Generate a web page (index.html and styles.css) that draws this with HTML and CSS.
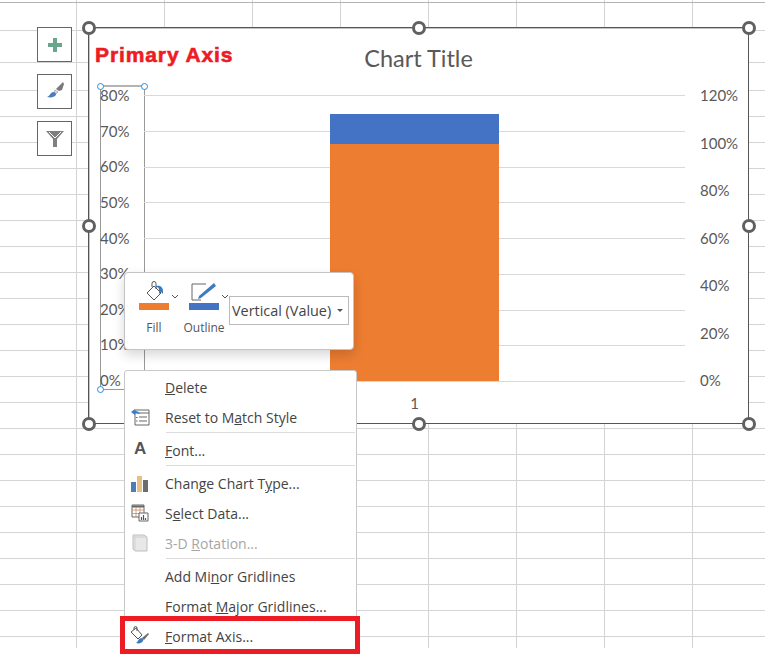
FILE: index.html
```html
<!DOCTYPE html>
<html lang="en">
<head>
    <meta charset="UTF-8">
    <title>Format Axis</title>
    <link rel="stylesheet" href="styles.css">
</head>
<body>

<div class="sheet">

    <div class="side-tools">
        <button class="side-btn">
            <svg width="16" height="16" viewBox="0 0 16 16"><path d="M6 1h4v5h5v4h-5v5H6v-5H1V6h5z" fill="#6aa68e"/></svg>
        </button>
        <button class="side-btn">
            <svg width="20" height="20" viewBox="0 0 20 20">
                <path d="M18 0l1 2-2 6-3 1-3-2z" fill="#7a7a7a"/>
                <path d="M10 8l3 2-2 2-2-2z" fill="#d5d5d5" stroke="#888" stroke-width=".5"/>
                <path d="M8 10c2 0 3 1 3 3-2 2-4 3-9 2 3-1 3-4 6-5z" fill="#4a7ebb"/>
            </svg>
        </button>
        <button class="side-btn">
            <svg width="20" height="20" viewBox="0 0 20 20"><path d="M1 2h18l-7 8v8H8v-8z" fill="#7f7f7f"/><path d="M4 3l6 6 6-6" fill="none" stroke="#fff"/></svg>
        </button>
    </div>

    <div class="chart">
        <div class="axis-note">Primary Axis</div>
        <div class="chart-title">Chart Title</div>

        <div class="axis-box">
            <i class="dot dot-tl"></i>
            <i class="dot dot-tr"></i>
            <i class="dot dot-bl"></i>
        </div>

        <div class="plot-row">
            <div class="axis axis-left">
                <span>80%</span><span>70%</span><span>60%</span><span>50%</span><span>40%</span><span>30%</span><span>20%</span><span>10%</span><span>0%</span>
            </div>
            <div class="plot">
                <div class="bar">
                    <div class="bar-blue"></div>
                    <div class="bar-orange"></div>
                </div>
            </div>
            <div class="axis axis-right">
                <span>120%</span><span>100%</span><span>80%</span><span>60%</span><span>40%</span><span>20%</span><span>0%</span>
            </div>
        </div>
        <div class="cat-label">1</div>

        <i class="handle h-tl"></i><i class="handle h-tc"></i><i class="handle h-tr"></i>
        <i class="handle h-ml"></i><i class="handle h-mr"></i>
        <i class="handle h-bl"></i><i class="handle h-bc"></i><i class="handle h-br"></i>
    </div>

    <div class="mini-bar">
        <div class="mini-tool">
            <svg class="mini-icon" width="30" height="22" viewBox="0 0 30 22">
                <path d="M8 12l7-7 7 7-7 7z" fill="#fff" stroke="#555"/>
                <path d="M13 6V2.500a2 2 0 0 1 4 0V8" fill="none" stroke="#555"/>
                <path d="M17 5c4-1 7 1 7 5v3l-2-2-2 2v-4c0-2-1-3-3-3z" fill="#3f7cbf"/>
            </svg>
            <i class="swatch swatch-orange"></i>
            <span class="mini-label">Fill</span>
        </div>
        <svg class="chev" width="8" height="5" viewBox="0 0 8 5"><path d="M1 1l3 3 3-3" fill="none" stroke="#555"/></svg>
        <div class="mini-tool tool-outline">
            <svg class="mini-icon" width="30" height="22" viewBox="0 0 30 22">
                <path d="M17 3H3v16h9" fill="none" stroke="#666"/>
                <path d="M10 15l-1 3 3-1L27 5l-2-3z" fill="#3f7cbf"/>
            </svg>
            <i class="swatch swatch-blue"></i>
            <span class="mini-label">Outline</span>
        </div>
        <svg class="chev" width="8" height="5" viewBox="0 0 8 5"><path d="M1 1l3 3 3-3" fill="none" stroke="#555"/></svg>
        <div class="mini-select">
            <span>Vertical (Value)</span>
            <i class="caret"></i>
        </div>
    </div>

    <div class="menu">
        <div class="menu-item"><span class="menu-text"><u>D</u>elete</span></div>
        <div class="menu-item">
            <svg class="menu-icon" width="20" height="20" viewBox="0 0 20 20">
                <path d="M5 3h14v15H5z" fill="#fff" stroke="#666"/>
                <path d="M5 6h14M9 10h8M9 14h8" stroke="#666"/>
                <path d="M6 10.500h1.500M6 14h1.500" stroke="#666"/>
                <path d="M1 5l4-3v2c3 0 4 1 5 3-2-1-3-1-5-1v2z" fill="#3f7cbf"/>
            </svg>
            <span class="menu-text">Reset to M<u>a</u>tch Style</span>
        </div>
        <div class="menu-sep"></div>
        <div class="menu-item">
            <span class="menu-letter">A</span>
            <span class="menu-text"><u>F</u>ont...</span>
        </div>
        <div class="menu-sep"></div>
        <div class="menu-item">
            <svg class="menu-icon" width="20" height="20" viewBox="0 0 20 20">
                <path d="M1 9h5v10H1z" fill="#4a7ebb"/>
                <path d="M7 3h5v16H7z" fill="#e6c183"/>
                <path d="M13 7h5v12h-5z" fill="#6d6d6d"/>
            </svg>
            <span class="menu-text">Change Chart T<u>y</u>pe...</span>
        </div>
        <div class="menu-item">
            <svg class="menu-icon" width="20" height="20" viewBox="0 0 20 20">
                <path d="M2 2h12v12H2z" fill="#fff" stroke="#666"/>
                <path d="M2 3.500h12" stroke="#666" stroke-width="2"/>
                <path d="M2 7h12M2 10.500h12M6 4v10M10 4v10" stroke="#d08a5a" stroke-width=".8"/>
                <path d="M9 10h9v8H9z" fill="#fff" stroke="#666"/>
                <path d="M11.500 17v-3M13.500 17v-5M15.500 17v-2" stroke="#555" stroke-width="1.200"/>
            </svg>
            <span class="menu-text">S<u>e</u>lect Data...</span>
        </div>
        <div class="menu-item is-disabled">
            <svg class="menu-icon" width="20" height="20" viewBox="0 0 20 20">
                <path d="M3 2h11l3 2v14H5l-2-2z" fill="#e8e8e8" stroke="#bdbdbd"/>
                <path d="M3 2l2 2h12M5 4v14" fill="none" stroke="#cfcfcf"/>
            </svg>
            <span class="menu-text">3-D <u>R</u>otation...</span>
        </div>
        <div class="menu-sep"></div>
        <div class="menu-item"><span class="menu-text">Add Mi<u>n</u>or Gridlines</span></div>
        <div class="menu-item"><span class="menu-text">Format <u>M</u>ajor Gridlines...</span></div>
        <div class="menu-item">
            <svg class="menu-icon" width="20" height="20" viewBox="0 0 20 20">
                <path d="M1 6l5-4 6 7-4 4z" fill="#fff" stroke="#555"/>
                <path d="M4 4V2a1.500 1.500 0 0 1 3 0v3" fill="none" stroke="#555"/>
                <path d="M18 7l1 1-5 6-2-2z" fill="#6d6d6d"/>
                <path d="M11 12c2 0 3 1 2 3-1 2-4 3-7 2 2-1 2-4 5-5z" fill="#3f7cbf"/>
            </svg>
            <span class="menu-text"><u>F</u>ormat Axis...</span>
        </div>
    </div>

    <div class="callout"></div>
</div>

</body>
</html>
```

FILE: styles.css
```css
* {
    box-sizing: border-box;
    margin: 0;
    padding: 0;
}
body {
    background-color: white;
    font-family: 'Open Sans', 'Liberation Sans', sans-serif;
    min-height: 656px;
}
.sheet {
    position: relative;
    width: 765px;
    height: 648px;
    background-color: white;
    background-image:
        linear-gradient(#b4b4b4, #b4b4b4),
        linear-gradient(#d4d4d4, #d4d4d4),
        linear-gradient(#d4d4d4, #d4d4d4),
        repeating-linear-gradient(to bottom, #d4d4d4 0, #d4d4d4 1px, transparent 1px, transparent 26px),
        linear-gradient(to right, #d4d4d4 1px, transparent 1px);
    background-size: 100% 1px, 100% 1px, 100% 1px, 100% 558px, 88px 100%;
    background-position: 0 2px, 0 30px, 0 62px, 0 90px, 76px 0;
    background-repeat: no-repeat, no-repeat, no-repeat, no-repeat, repeat-x;
}

/* botoes do lado do grafico */
.side-tools {
    position: absolute;
    left: 37px;
    top: 27px;
    display: flex;
    flex-direction: column;
    gap: 12px;
}
.side-btn {
    width: 35px;
    height: 35px;
    background-color: white;
    border: 1px solid #666;
    display: flex;
    align-items: center;
    justify-content: center;
}

/* grafico */
.chart {
    position: absolute;
    left: 88px;
    top: 27px;
    width: 661px;
    height: 397px;
    background-color: white;
    border: 1px solid #555;
    box-shadow: inset 1px 1px 0 #c4c4c4;
    color: #595959;
}
.axis-note {
    position: absolute;
    left: 6px;
    top: 15px;
    font-family: 'Liberation Sans', Arial, sans-serif;
    font-size: 21px;
    font-weight: bold;
    letter-spacing: .9px;
    line-height: 24px;
    color: #ed1c24;
    -webkit-text-stroke: .6px #ed1c24;
}
.chart-title {
    text-align: center;
    padding-top: 15px;
    height: 67px;
    font-family: 'Lato', 'Open Sans', sans-serif;
    font-size: 23.500px;
    line-height: 30px;
}
.axis-box {
    position: absolute;
    left: 11px;
    top: 57px;
    width: 45px;
    height: 305px;
    border: 1px solid #999;
    border-top: 2px solid #b4b4b4;
}
.dot {
    position: absolute;
    width: 7px;
    height: 7px;
    background-color: white;
    border: 1px solid #1e8fe6;
    border-radius: 50%;
}
.dot-tl { left: -4px; top: -4px; }
.dot-tr { right: -4px; top: -4px; }
.dot-bl { left: -4px; bottom: -4px; }

.plot-row {
    display: flex;
    height: 287px;
}
.axis {
    display: flex;
    flex-direction: column;
    justify-content: space-between;
    font-family: 'Lato', 'Open Sans', sans-serif;
    font-size: 15px;
    line-height: 16px;
    margin: -8px 0 -6px;
    position: relative;
}
.axis-left {
    width: 55px;
    padding-left: 11px;
}
.axis-right {
    padding-left: 15px;
}
.plot {
    position: relative;
    width: 541px;
    background-image: repeating-linear-gradient(to bottom, #d9d9d9 0, #d9d9d9 1px, transparent 1px, transparent 35.75px);
}
.bar {
    position: absolute;
    left: 186px;
    top: 19px;
    bottom: 1px;
    width: 169px;
    display: flex;
    flex-direction: column;
}
.bar-blue {
    height: 30px;
    background-color: #4472c4;
}
.bar-orange {
    flex: 1;
    background-color: #ed7d31;
}
.cat-label {
    margin: 12px 0 0 55px;
    width: 541px;
    text-align: center;
    font-family: 'Lato', 'Open Sans', sans-serif;
    font-size: 15px;
    line-height: 18px;
}

.handle {
    position: absolute;
    width: 14px;
    height: 14px;
    background-color: white;
    border: 3px solid #606060;
    border-radius: 50%;
}
.h-tl { left: -7px; top: -7px; }
.h-tc { left: 323px; top: -7px; }
.h-tr { right: -8px; top: -7px; }
.h-ml { left: -7px; top: 191px; }
.h-mr { right: -8px; top: 191px; }
.h-bl { left: -7px; bottom: -8px; }
.h-bc { left: 323px; bottom: -8px; }
.h-br { right: -8px; bottom: -8px; }

/* barra flutuante */
.mini-bar {
    position: absolute;
    left: 124px;
    top: 272px;
    width: 230px;
    height: 78px;
    background-color: white;
    border: 1px solid #c4c4c4;
    border-radius: 4px;
    box-shadow: 0 5px 12px rgba(0, 0, 0, 0.16);
    display: flex;
    align-items: flex-start;
    padding: 8px 0 0 14px;
    color: #555;
}
.mini-tool {
    width: 30px;
    display: flex;
    flex-direction: column;
    align-items: center;
}
.tool-outline {
    margin-left: 10px;
}
.mini-icon {
    display: block;
}
.swatch {
    display: block;
    width: 30px;
    height: 7px;
}
.swatch-orange { background-color: #ed7d31; }
.swatch-blue { background-color: #4472c4; }
.mini-label {
    font-size: 12px;
    line-height: 16px;
    margin-top: 10px;
    white-space: nowrap;
}
.chev {
    margin: 13px 0 0 2px;
    flex-shrink: 0;
}
.mini-select {
    width: 120px;
    height: 29px;
    margin-top: 15px;
    flex-shrink: 0;
    border: 1px solid #bbb;
    display: flex;
    align-items: center;
    justify-content: space-between;
    padding: 0 5px 0 2px;
    font-size: 14.400px;
    white-space: nowrap;
    color: #444;
}
.caret {
    width: 0;
    height: 0;
    border-left: 3px solid transparent;
    border-right: 3px solid transparent;
    border-top: 3px solid #555;
}

/* menu de contexto */
.menu {
    position: absolute;
    left: 124px;
    top: 370px;
    width: 233px;
    height: 284px;
    background-color: white;
    border: 1px solid #c8c8c8;
    border-radius: 3px;
    padding-top: 2px;
    color: #444;
    font-size: 14px;
}
.menu-item {
    position: relative;
    height: 30px;
    display: flex;
    align-items: center;
    padding-left: 40px;
}
.menu-text {
    white-space: nowrap;
    margin-bottom: 2px;
}
.menu-icon {
    position: absolute;
    left: 5px;
    top: 4px;
}
.menu-letter {
    position: absolute;
    left: 9px;
    top: 3px;
    font-family: 'Liberation Sans', Arial, sans-serif;
    font-size: 17px;
    font-weight: bold;
    color: #555;
}
.is-disabled {
    color: #a6a6a6;
}
.menu-sep {
    height: 1px;
    margin: -1px 1px 3px 41px;
    background-color: #dcdcdc;
}
.callout {
    position: absolute;
    left: 120px;
    top: 616px;
    width: 240px;
    height: 38px;
    border: 5px solid #ed1c24;
}
```
